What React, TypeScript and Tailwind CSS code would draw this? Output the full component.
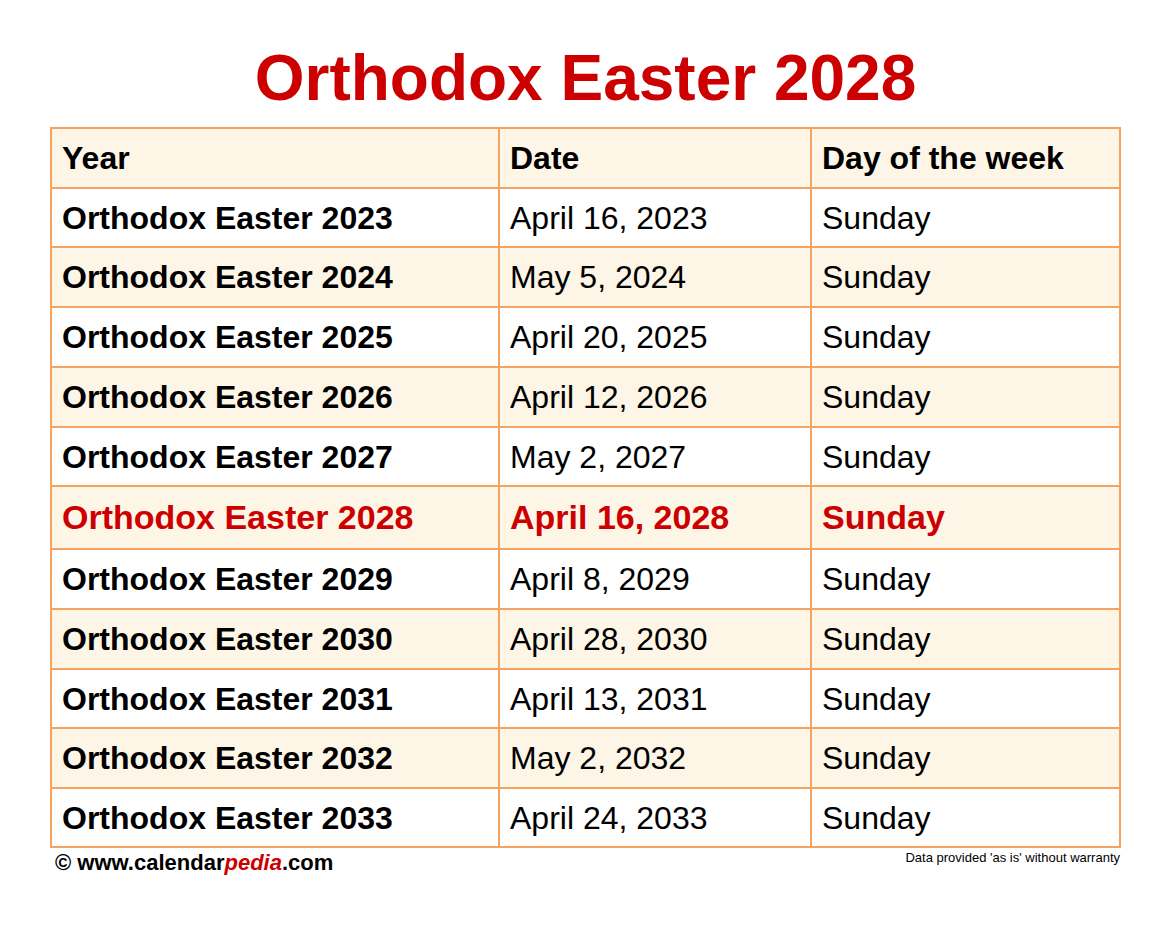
import React from "react";

type Row = { year: string; date: string; day: string; h: string; alt: boolean; hl?: boolean };

const rows: Row[] = [
  { year: "Orthodox Easter 2023", date: "April 16, 2023", day: "Sunday", h: "h-[59px]", alt: false },
  { year: "Orthodox Easter 2024", date: "May 5, 2024", day: "Sunday", h: "h-[60px]", alt: true },
  { year: "Orthodox Easter 2025", date: "April 20, 2025", day: "Sunday", h: "h-[60px]", alt: false },
  { year: "Orthodox Easter 2026", date: "April 12, 2026", day: "Sunday", h: "h-[60px]", alt: true },
  { year: "Orthodox Easter 2027", date: "May 2, 2027", day: "Sunday", h: "h-[59px]", alt: false },
  { year: "Orthodox Easter 2028", date: "April 16, 2028", day: "Sunday", h: "h-[63px]", alt: true, hl: true },
  { year: "Orthodox Easter 2029", date: "April 8, 2029", day: "Sunday", h: "h-[60px]", alt: false },
  { year: "Orthodox Easter 2030", date: "April 28, 2030", day: "Sunday", h: "h-[60px]", alt: true },
  { year: "Orthodox Easter 2031", date: "April 13, 2031", day: "Sunday", h: "h-[59px]", alt: false },
  { year: "Orthodox Easter 2032", date: "May 2, 2032", day: "Sunday", h: "h-[60px]", alt: true },
  { year: "Orthodox Easter 2033", date: "April 24, 2033", day: "Sunday", h: "h-[59px]", alt: false },
];

const cell = "flex items-center pl-[10px] border-r-2 border-b-2 border-[#f4a460]";

export default function App() {
  return (
    <div
      className="w-[1171px] h-[925px] bg-white text-black"
      style={{ fontFamily: '"Liberation Sans", Arial, sans-serif' }}
    >
      <div className="pt-[46px] h-[110px] text-center text-[64px] leading-[64px] font-bold text-[#cc0000]">
        Orthodox Easter 2028
      </div>
      <div className="ml-[50px] mt-[17px] w-[1071px] border-t-2 border-l-2 border-[#f4a460]">
        <div className="flex h-[60px] bg-[#fdf5e6] text-[32px] font-bold">
          <div className={`${cell} w-[448px]`}>Year</div>
          <div className={`${cell} w-[312px]`}>Date</div>
          <div className={`${cell} w-[309px]`}>Day of the week</div>
        </div>
        {rows.map((r) => (
          <div
            key={r.year}
            className={`flex ${r.h} ${r.alt ? "bg-[#fdf5e6]" : "bg-white"} ${
              r.hl ? "text-[34px] text-[#cc0000] font-bold" : "text-[32px]"
            }`}
          >
            <div className={`${cell} w-[448px] font-bold`}>{r.year}</div>
            <div className={`${cell} w-[312px]`}>{r.date}</div>
            <div className={`${cell} w-[309px]`}>{r.day}</div>
          </div>
        ))}
      </div>
      <div className="ml-[50px] w-[1071px] flex justify-between items-start">
        <div className="pl-[5px] pt-[4px] text-[22px] leading-[22px] font-bold">
          © www.calendar<span className="italic text-[#cc0000]">pedia</span>.com
        </div>
        <div className="pr-[1px] pt-[3px] text-[13px] leading-[13px]">
          Data provided 'as is' without warranty
        </div>
      </div>
    </div>
  );
}
